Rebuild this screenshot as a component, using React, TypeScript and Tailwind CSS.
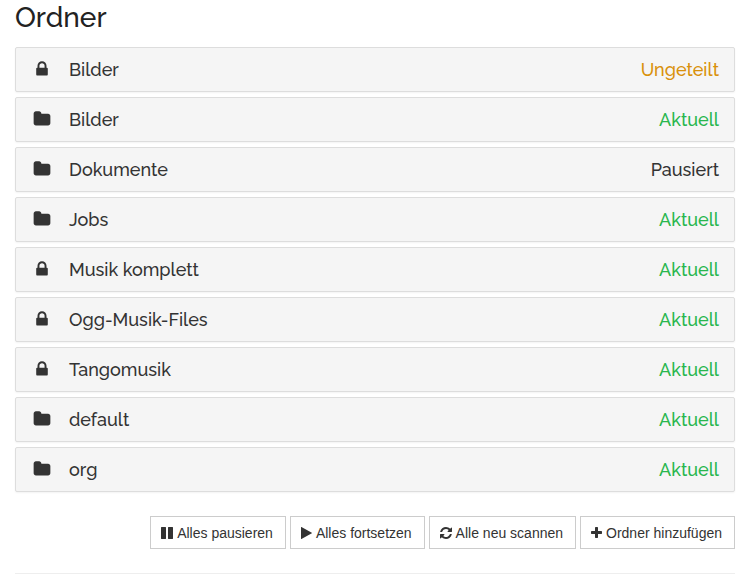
const ICONS = {
  lock: "M640 768h512v-192q0-106-75-181t-181-75-181 75-75 181v192zm832 96v576q0 40-28 68t-68 28h-960q-40 0-68-28t-28-68v-576q0-40 28-68t68-28h32v-192q0-184 132-316t316-132 316 132 132 316v192h32q40 0 68 28t28 68z",
  folder: "M1728 608v704q0 92-66 158t-158 66h-1216q-92 0-158-66t-66-158v-960q0-92 66-158t158-66h320q92 0 158 66t66 158v32h672q92 0 158 66t66 158z",
  pause: "M1664 192v1408q0 26-19 45t-45 19h-512q-26 0-45-19t-19-45v-1408q0-26 19-45t45-19h512q26 0 45 19t19 45zm-896 0v1408q0 26-19 45t-45 19h-512q-26 0-45-19t-19-45v-1408q0-26 19-45t45-19h512q26 0 45 19t19 45z",
  play: "M1576 927l-1328 738q-23 13-39.5 3t-16.5-36v-1472q0-26 16.5-36t39.5 3l1328 738q23 13 23 31t-23 31z",
  refresh: "M1639 1056q0 5-1 7-64 268-268 434.5t-478 166.5q-146 0-282.5-55t-243.5-157l-129 129q-19 19-45 19t-45-19-19-45v-448q0-26 19-45t45-19h448q26 0 45 19t19 45-19 45l-137 137q71 66 161 102t187 36q134 0 250-65t186-179q11-17 53-117 8-23 30-23h192q13 0 22.5 9.5t9.5 22.5zm25-800v448q0 26-19 45t-45 19h-448q-26 0-45-19t-19-45 19-45l138-138q-148-137-349-137-134 0-250 65t-186 179q-11 17-53 117-8 23-30 23h-199q-13 0-22.5-9.5t-9.5-22.5v-7q65-268 270-434.5t480-166.5q146 0 284 55.5t245 156.5l130-129q19-19 45-19t45 19 19 45z",
  plus: "M1600 736v192q0 40-28 68t-68 28h-416v416q0 40-28 68t-68 28h-192q-40 0-68-28t-28-68v-416h-416q-40 0-68-28t-28-68v-192q0-40 28-68t68-28h416v-416q0-40 28-68t68-28h192q40 0 68 28t28 68v416h416q40 0 68 28t28 68z",
};

type IconProps = { name: keyof typeof ICONS; viewBox?: string; className: string };

function Icon({ name, viewBox = "0 0 1792 1792", className }: IconProps) {
  return (
    <svg viewBox={viewBox} fill="currentColor" aria-hidden="true" className={className}>
      <path d={ICONS[name]} />
    </svg>
  );
}

const STATUS_COLORS = {
  Ungeteilt: "text-[#d9910b]",
  Aktuell: "text-[#29b74e]",
  Pausiert: "text-[#333333]",
};

type Folder = { name: string; icon: "lock" | "folder"; status: keyof typeof STATUS_COLORS };

const folders: Folder[] = [
  { name: "Bilder", icon: "lock", status: "Ungeteilt" },
  { name: "Bilder", icon: "folder", status: "Aktuell" },
  { name: "Dokumente", icon: "folder", status: "Pausiert" },
  { name: "Jobs", icon: "folder", status: "Aktuell" },
  { name: "Musik komplett", icon: "lock", status: "Aktuell" },
  { name: "Ogg-Musik-Files", icon: "lock", status: "Aktuell" },
  { name: "Tangomusik", icon: "lock", status: "Aktuell" },
  { name: "default", icon: "folder", status: "Aktuell" },
  { name: "org", icon: "folder", status: "Aktuell" },
];

const WIDE = { viewBox: "128 0 1536 1792", className: "h-3.5 w-3" };
const NARROW = { viewBox: "192 0 1408 1792", className: "h-3.5 w-[11px]" };

const actions = [
  { label: "Alles pausieren", icon: "pause", box: WIDE },
  { label: "Alles fortsetzen", icon: "play", box: NARROW },
  { label: "Alle neu scannen", icon: "refresh", box: WIDE },
  { label: "Ordner hinzufügen", icon: "plus", box: NARROW },
] as const;

export default function App() {
  return (
    <main className="bg-white px-[15px] font-[Raleway,Lato,sans-serif] font-medium text-[#333333]">
      <h1 className="pt-0.5 text-[28px] leading-8 text-[#222222]">Ordner</h1>
      <div className="mt-[13px] flex flex-col gap-[5px]">
        {folders.map((folder, i) => (
          <button
            key={i}
            type="button"
            className="flex h-[45px] w-full items-center rounded-[2px] border border-[#dddddd] bg-[#f5f5f5] px-[15px] text-left text-lg shadow-xs"
          >
            <span className="flex w-[22px] justify-center pb-px">
              <Icon name={folder.icon} className="size-[18px]" />
            </span>
            <span className="ml-4 flex-1">{folder.name}</span>
            <span className={STATUS_COLORS[folder.status]}>{folder.status}</span>
          </button>
        ))}
      </div>
      <div className="mt-6 flex flex-wrap justify-end gap-1 font-['Liberation_Sans',Arial,sans-serif] text-sm font-normal">
        {actions.map(({ label, icon, box }) => (
          <button
            key={label}
            type="button"
            className="flex h-[33px] items-center gap-1 border border-[#cccccc] bg-white pr-3 pl-2.5"
          >
            <Icon name={icon} viewBox={box.viewBox} className={box.className} />
            {label}
          </button>
        ))}
      </div>
      <hr className="mt-6 border-[#eeeeee]" />
    </main>
  );
}
